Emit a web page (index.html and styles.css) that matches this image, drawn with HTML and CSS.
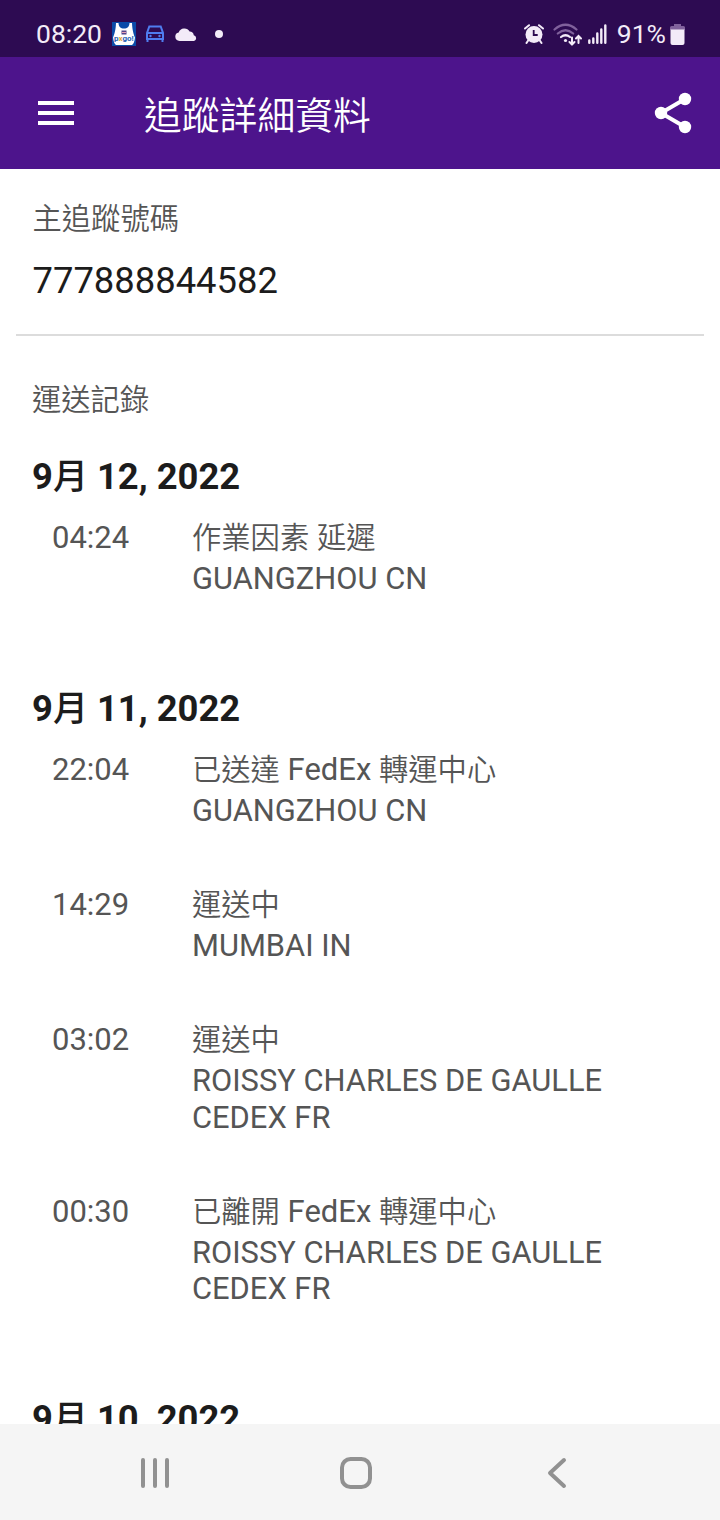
FILE: index.html
```html
<!DOCTYPE html>
<html lang="zh-Hant">
<head>
  <meta charset="UTF-8">
  <meta name="viewport" content="width=device-width, initial-scale=1.0">
  <title>追蹤詳細資料</title>
  <link rel="stylesheet" href="styles.css">
</head>
<body>
  <div class="status-bar">
    <span class="clock">08:20</span>
    <svg class="icon-pxgo" width="24" height="24" viewBox="0 0 24 24">
      <rect width="24" height="24" fill="#0b4ba8"/>
      <path d="M4 1h2.500c.3 4 2 5.500 5.500 5.500S17.200 5 17.500 1H20c.3 7 1.500 11 3 14.500-.5 4-1.500 6.500-3 7.500H4c-1.500-1-2.500-3.500-3-7.500C2.500 12 3.700 8 4 1z" fill="#fff"/>
      <rect x="9.500" y="8.500" width="5" height="4" fill="#54458c"/>
      <path d="M10 10.500h4" stroke="#e7a0b4"/>
      <text x="2" y="18.500" class="pxgo-text" fill="#1d60b5">p<tspan fill="#e3a63c">x</tspan>go!</text>
    </svg>
    <svg class="icon-car" width="20" height="18" viewBox="0 0 20 18" fill="none" stroke="#4f7df0" stroke-width="2">
      <path d="M2 8L4.300 1.500h11.400L18 8v6H2zM2 8h16M2.500 14v3M17.500 14v3"/>
      <circle cx="5.500" cy="11" r="1.200" fill="#4f7df0" stroke="none"/>
      <circle cx="14.500" cy="11" r="1.200" fill="#4f7df0" stroke="none"/>
    </svg>
    <svg class="icon-cloud" width="22" height="13" viewBox="0 0 22 13" fill="#f3ebf8">
      <path d="M4.500 13a4.300 4.300 0 0 1-.8-8.500A6 6 0 0 1 14.600 3.600a4.300 4.300 0 0 1 4.200 3.600A3 3 0 0 1 19 13z"/>
    </svg>
    <span class="dot"></span>
    <div class="status-right">
      <svg width="20" height="20" viewBox="0 0 20 20">
        <path d="M1 4.500L5 1.200M19 4.500L15 1.200M4.500 16l-2 3M15.500 16l2 3" stroke="#f3ebf8" stroke-width="2" stroke-linecap="round"/>
        <circle cx="10" cy="10.500" r="8.500" fill="#f3ebf8"/>
        <path d="M9.700 6v5h4" fill="none" stroke="#2d0b52" stroke-width="1.800"/>
      </svg>
      <svg class="icon-wifi" width="29" height="23" viewBox="0 0 29 23" fill="none" stroke-width="2.200" stroke-linecap="round">
        <path d="M1.500 6.500q11-9.500 22 0M4.800 10.500q7.700-6.500 15.400 0" stroke="#80619c"/>
        <path d="M8 14q4.500-3.500 9 0" stroke="#f3ebf8"/>
        <circle cx="12.500" cy="17.500" r="1.600" fill="#f3ebf8"/>
        <path d="M19 14.500v7M16.500 19l2.500 2.500 2.500-2.500M25.500 20v-7M23 15.500l2.500-2.500 2.500 2.500" stroke="#f3ebf8" stroke-width="2"/>
      </svg>
      <svg class="icon-signal" width="19" height="20" viewBox="0 0 19 20" stroke="#f3ebf8" stroke-width="2.400" stroke-linecap="round">
        <path d="M1.300 16.500v2.300M5.300 14.500v4.300M9.300 9.500v9.300M13.300 5.500v13.300M17.300 1.500v17.300"/>
      </svg>
      <span class="percent">91%</span>
      <svg class="icon-battery" width="15" height="21" viewBox="0 0 15 21">
        <path d="M4 0h7v2h2.500q1.500 0 1.500 1.500V6H0V3.500Q0 2 1.500 2H4z" fill="#80619c"/>
        <path d="M.5 5.500h14V19q0 2-2 2h-10q-2 0-2-2z" fill="#f3ebf8"/>
      </svg>
    </div>
  </div>

  <header class="app-bar">
    <svg class="icon-menu" width="36" height="24" viewBox="0 0 36 24" fill="#fff">
      <path d="M0 0h36v4H0zM0 10h36v4H0zM0 20h36v4H0z"/>
    </svg>
    <h1>追蹤詳細資料</h1>
    <svg class="icon-share" width="38" height="42" viewBox="0 0 38 42" fill="#fff">
      <path d="M31 7L7 21l24 14" fill="none" stroke="#fff" stroke-width="4"/>
      <circle cx="31" cy="7" r="6.200"/>
      <circle cx="7" cy="21" r="6.200"/>
      <circle cx="31" cy="35" r="6.200"/>
    </svg>
  </header>

  <main>
    <section class="tracking">
      <h2 class="label">主追蹤號碼</h2>
      <p class="number">777888844582</p>
    </section>

    <section class="history">
      <h2 class="label">運送記錄</h2>

      <div class="day">
        <h3>9<span class="cjk">月</span> 12, 2022</h3>
        <div class="event">
          <span class="time">04:24</span>
          <div class="detail">
            <p class="status"><span class="cjk">作業因素</span> <span class="cjk">延遲</span></p>
            <p class="place">GUANGZHOU CN</p>
          </div>
        </div>
      </div>

      <div class="day">
        <h3>9<span class="cjk">月</span> 11, 2022</h3>
        <div class="event">
          <span class="time">22:04</span>
          <div class="detail">
            <p class="status"><span class="cjk">已送達</span> FedEx <span class="cjk">轉運中心</span></p>
            <p class="place">GUANGZHOU CN</p>
          </div>
        </div>
        <div class="event">
          <span class="time">14:29</span>
          <div class="detail">
            <p class="status"><span class="cjk">運送中</span></p>
            <p class="place">MUMBAI IN</p>
          </div>
        </div>
        <div class="event">
          <span class="time">03:02</span>
          <div class="detail">
            <p class="status"><span class="cjk">運送中</span></p>
            <p class="place">ROISSY CHARLES DE GAULLE CEDEX FR</p>
          </div>
        </div>
        <div class="event">
          <span class="time">00:30</span>
          <div class="detail">
            <p class="status"><span class="cjk">已離開</span> FedEx <span class="cjk">轉運中心</span></p>
            <p class="place">ROISSY CHARLES DE GAULLE CEDEX FR</p>
          </div>
        </div>
      </div>

      <div class="day">
        <h3>9<span class="cjk">月</span> 10, 2022</h3>
      </div>
    </section>
  </main>

  <nav class="nav-bar">
    <svg width="30" height="32" viewBox="0 0 30 32">
      <path d="M3 3v26M15 3v26M27 3v26"/>
    </svg>
    <svg class="icon-home" width="34" height="34" viewBox="0 0 34 34">
      <rect x="3" y="3" width="28" height="28" rx="8.500"/>
    </svg>
    <svg class="icon-back" width="22" height="34" viewBox="0 0 22 34">
      <path d="M18 4L4 17l14 13"/>
    </svg>
  </nav>
</body>
</html>
```
FILE: styles.css
```css
* {
  margin: 0;
  padding: 0;
  box-sizing: border-box;
}

body {
  height: 100vh;
  display: flex;
  flex-direction: column;
  overflow: hidden;
  background-color: #fff;
  font-family: Roboto, "Noto Sans CJK TC", sans-serif;
  color: #555;
}

svg {
  display: block;
  flex: none;
}

/* Status bar */
.status-bar {
  height: 57px;
  flex: none;
  display: flex;
  align-items: center;
  padding: 11px 35px 0 36px;
  background-color: #2d0b52;
  color: #f3ebf8;
  font-size: 26.5px;
}

.clock {
  width: 76px;
  padding-bottom: 2px;
}

.pxgo-text {
  font-size: 8px;
  font-weight: 700;
}

.icon-car {
  margin-left: 9px;
}

.icon-cloud {
  margin-left: 10px;
}

.dot {
  width: 8px;
  height: 8px;
  margin-left: 18px;
  border-radius: 50%;
  background-color: #f3ebf8;
}

.status-right {
  display: flex;
  align-items: center;
  margin-left: auto;
}

.icon-wifi {
  margin-left: 9px;
}

.icon-signal {
  margin-left: 6px;
}

.percent {
  margin-left: 10px;
  padding-bottom: 2px;
}

.icon-battery {
  margin-left: 4px;
}

/* App bar */
.app-bar {
  height: 112px;
  flex: none;
  display: flex;
  align-items: center;
  padding: 0 28px 0 38px;
  background-color: #4d148c;
  color: #fff;
}

.app-bar h1 {
  margin-left: 70px;
  padding-top: 6px;
  font-size: 37.8px;
  font-weight: 350;
  line-height: 56px;
}

.icon-share {
  margin-left: auto;
}

/* Content */
main {
  flex: 1;
  min-height: 0;
  overflow: hidden;
}

.label {
  font-size: 29.3px;
  font-weight: 350;
  line-height: 44px;
}

.tracking {
  height: 167px;
  margin: 0 16px;
  padding: 28px 16px 0 16.5px;
  border-bottom: 2px solid #dcdcdc;
}

.number {
  margin-top: 18px;
  font-size: 36.4px;
  line-height: 44px;
  color: #1c1c1c;
}

.history {
  padding: 42px 32px 0;
}

.history .label {
  margin-bottom: 31px;
}

.day {
  margin-bottom: 33px;
}

.day h3 {
  height: 48px;
  margin-bottom: 16px;
  font-size: 36.4px;
  font-weight: 700;
  line-height: 48px;
  color: #1c1c1c;
}

.day h3 .cjk {
  font-size: 35px;
  font-weight: 500;
}

.event {
  display: flex;
  padding: 0 70px 54.5px 20px;
  font-size: 31px;
}

.time {
  width: 140px;
  flex: none;
  line-height: 42px;
}

.status {
  height: 44px;
  line-height: 42px;
}

.status .cjk {
  font-size: 29.3px;
  font-weight: 350;
}

.place {
  font-size: 30.85px;
  line-height: 36.5px;
}

/* Bottom navigation */
.nav-bar {
  height: 96px;
  flex: none;
  display: flex;
  align-items: center;
  padding: 2px 0 0 140px;
  background-color: #f5f5f5;
}

.nav-bar svg {
  fill: none;
  stroke: #919191;
  stroke-width: 4;
  stroke-linecap: round;
  stroke-linejoin: round;
}

.icon-home {
  margin-left: 169px;
}

.icon-back {
  margin-left: 173px;
}
```
